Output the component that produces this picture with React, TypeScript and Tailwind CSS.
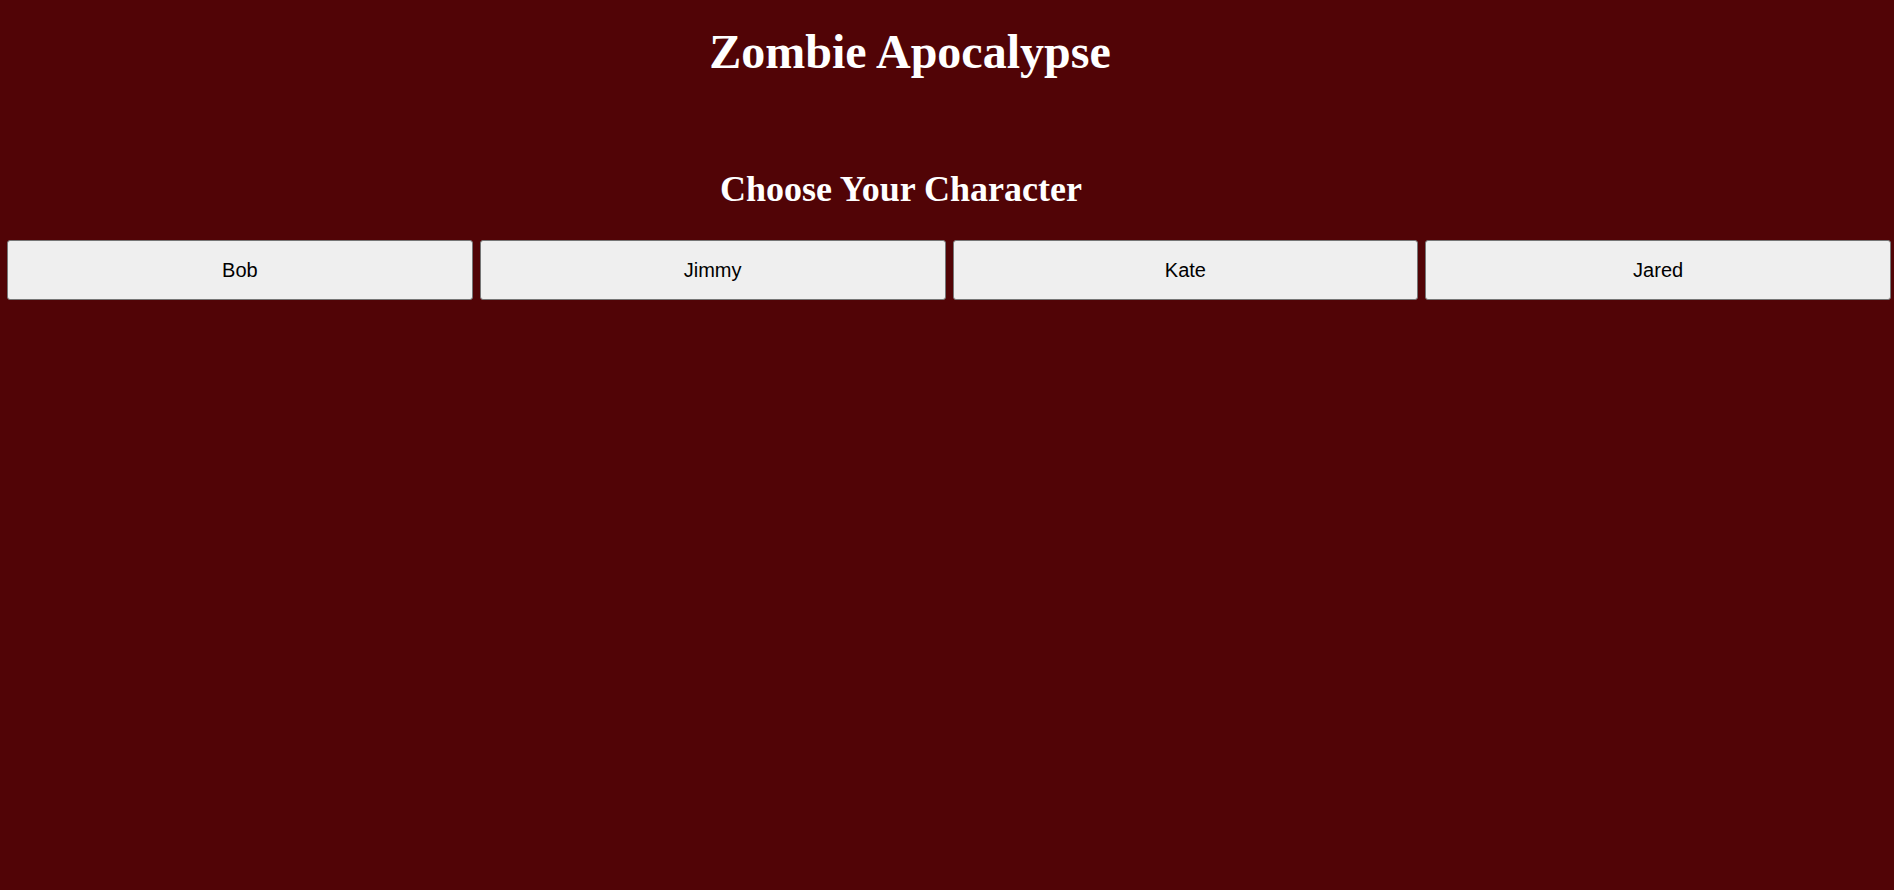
import React from "react";

export default function App() {
  const names = ["Bob", "Jimmy", "Kate", "Jared"];
  return (
    <div className="min-h-[890px] w-full bg-[#510406] flex flex-col">
      <h1 className="mt-[25px] pr-[74px] text-center text-white font-bold text-[48px] leading-[53px] font-['Liberation_Serif',serif]">
        Zombie Apocalypse
      </h1>
      <h2 className="mt-[91px] pr-[92px] text-center text-white font-bold text-[36px] leading-[40px] font-['Liberation_Serif',serif]">
        Choose Your Character
      </h2>
      <div className="mt-[31px] flex gap-[7px] pl-[7px] pr-[3px]">
        {names.map((n) => (
          <button
            key={n}
            className="flex-1 h-[60px] bg-[#efefef] border border-[#767676] rounded-[3px] text-black text-[20px] font-['Liberation_Sans',Arial,sans-serif] flex items-center justify-center"
          >
            {n}
          </button>
        ))}
      </div>
    </div>
  );
}
